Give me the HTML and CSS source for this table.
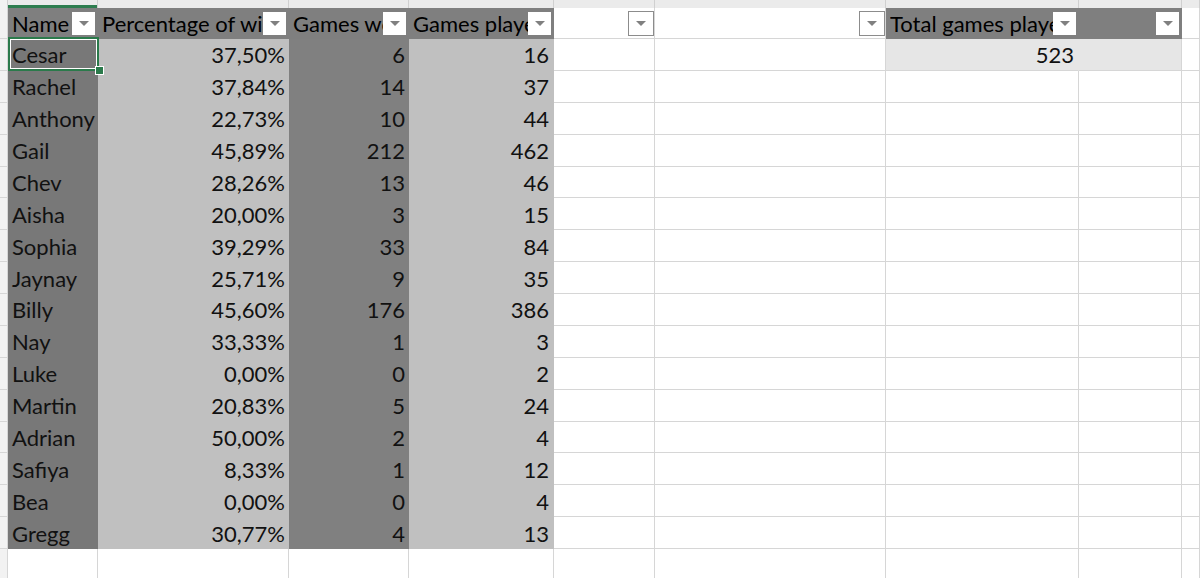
FILE: index.html
```html
<!DOCTYPE html>
<html>
<head>
<meta charset="utf-8">
<link rel="stylesheet" href="styles.css">
<title>Sheet</title>
</head>
<body>
<div class="sheet">
  <div class="row top">
    <div class="c rh"></div><div class="c sel-col"></div><div class="c"></div><div class="c"></div><div class="c"></div><div class="c"></div><div class="c"></div><div class="c"></div><div class="c"></div><div class="c"></div>
  </div>
  <div class="row head">
    <div class="c rh"></div>
    <div class="c th"><span class="lbl">Name</span><span class="dd"></span></div>
    <div class="c th"><span class="lbl">Percentage of wins</span><span class="dd"></span></div>
    <div class="c th"><span class="lbl">Games won</span><span class="dd"></span></div>
    <div class="c th"><span class="lbl">Games played</span><span class="dd"></span></div>
    <div class="c te"><span class="lbl"></span><span class="dd bd"></span></div>
    <div class="c te"><span class="lbl"></span><span class="dd bd"></span></div>
    <div class="c th"><span class="lbl">Total games played</span><span class="dd"></span></div>
    <div class="c th"><span class="lbl"></span><span class="dd"></span></div>
    <div class="c"></div>
  </div>
  <div class="row"><div class="c rh"></div><div class="c nm active">Cesar<span class="selbox"></span><span class="handle"></span></div><div class="c pc">37,50%</div><div class="c gw">6</div><div class="c gp">16</div><div class="c"></div><div class="c"></div><div class="c tot">523</div><div class="c tot2"></div><div class="c"></div></div>
  <div class="row"><div class="c rh"></div><div class="c nm">Rachel</div><div class="c pc">37,84%</div><div class="c gw">14</div><div class="c gp">37</div><div class="c"></div><div class="c"></div><div class="c"></div><div class="c"></div><div class="c"></div></div>
  <div class="row"><div class="c rh"></div><div class="c nm">Anthony</div><div class="c pc">22,73%</div><div class="c gw">10</div><div class="c gp">44</div><div class="c"></div><div class="c"></div><div class="c"></div><div class="c"></div><div class="c"></div></div>
  <div class="row"><div class="c rh"></div><div class="c nm">Gail</div><div class="c pc">45,89%</div><div class="c gw">212</div><div class="c gp">462</div><div class="c"></div><div class="c"></div><div class="c"></div><div class="c"></div><div class="c"></div></div>
  <div class="row"><div class="c rh"></div><div class="c nm">Chev</div><div class="c pc">28,26%</div><div class="c gw">13</div><div class="c gp">46</div><div class="c"></div><div class="c"></div><div class="c"></div><div class="c"></div><div class="c"></div></div>
  <div class="row"><div class="c rh"></div><div class="c nm">Aisha</div><div class="c pc">20,00%</div><div class="c gw">3</div><div class="c gp">15</div><div class="c"></div><div class="c"></div><div class="c"></div><div class="c"></div><div class="c"></div></div>
  <div class="row"><div class="c rh"></div><div class="c nm">Sophia</div><div class="c pc">39,29%</div><div class="c gw">33</div><div class="c gp">84</div><div class="c"></div><div class="c"></div><div class="c"></div><div class="c"></div><div class="c"></div></div>
  <div class="row"><div class="c rh"></div><div class="c nm">Jaynay</div><div class="c pc">25,71%</div><div class="c gw">9</div><div class="c gp">35</div><div class="c"></div><div class="c"></div><div class="c"></div><div class="c"></div><div class="c"></div></div>
  <div class="row"><div class="c rh"></div><div class="c nm">Billy</div><div class="c pc">45,60%</div><div class="c gw">176</div><div class="c gp">386</div><div class="c"></div><div class="c"></div><div class="c"></div><div class="c"></div><div class="c"></div></div>
  <div class="row"><div class="c rh"></div><div class="c nm">Nay</div><div class="c pc">33,33%</div><div class="c gw">1</div><div class="c gp">3</div><div class="c"></div><div class="c"></div><div class="c"></div><div class="c"></div><div class="c"></div></div>
  <div class="row"><div class="c rh"></div><div class="c nm">Luke</div><div class="c pc">0,00%</div><div class="c gw">0</div><div class="c gp">2</div><div class="c"></div><div class="c"></div><div class="c"></div><div class="c"></div><div class="c"></div></div>
  <div class="row"><div class="c rh"></div><div class="c nm">Martin</div><div class="c pc">20,83%</div><div class="c gw">5</div><div class="c gp">24</div><div class="c"></div><div class="c"></div><div class="c"></div><div class="c"></div><div class="c"></div></div>
  <div class="row"><div class="c rh"></div><div class="c nm">Adrian</div><div class="c pc">50,00%</div><div class="c gw">2</div><div class="c gp">4</div><div class="c"></div><div class="c"></div><div class="c"></div><div class="c"></div><div class="c"></div></div>
  <div class="row"><div class="c rh"></div><div class="c nm">Safiya</div><div class="c pc">8,33%</div><div class="c gw">1</div><div class="c gp">12</div><div class="c"></div><div class="c"></div><div class="c"></div><div class="c"></div><div class="c"></div></div>
  <div class="row"><div class="c rh"></div><div class="c nm">Bea</div><div class="c pc">0,00%</div><div class="c gw">0</div><div class="c gp">4</div><div class="c"></div><div class="c"></div><div class="c"></div><div class="c"></div><div class="c"></div></div>
  <div class="row"><div class="c rh"></div><div class="c nm">Gregg</div><div class="c pc">30,77%</div><div class="c gw">4</div><div class="c gp">13</div><div class="c"></div><div class="c"></div><div class="c"></div><div class="c"></div><div class="c"></div></div>
  <div class="row"><div class="c rh"></div><div class="c"></div><div class="c"></div><div class="c"></div><div class="c"></div><div class="c"></div><div class="c"></div><div class="c"></div><div class="c"></div><div class="c"></div></div>
</div>
</body>
</html>
```

FILE: styles.css
```css
html, body {
  margin: 0;
  padding: 0;
  background: #ffffff;
  overflow: hidden;
}
.sheet {
  width: 1200px;
  height: 578px;
  overflow: hidden;
  font-family: Lato, "Liberation Sans", sans-serif;
  font-size: 22px;
  color: #111;
}
.row {
  display: grid;
  grid-template-columns: 8px 90px 191px 120px 145px 101px 231px 193px 103px 1fr;
  height: 31.875px;
}
.row.top {
  height: 8px;
  background: #ebebeb;
}
.row.head {
  height: 31px;
}
.c {
  box-sizing: border-box;
  border-right: 1px solid #d6d6d6;
  border-bottom: 1px solid #d6d6d6;
  display: flex;
  align-items: center;
  justify-content: flex-end;
  padding: 1px 3px 0 4px;
  white-space: nowrap;
  overflow: hidden;
  min-width: 0;
}
.top .c {
  border-bottom: none;
  border-right-color: #d0d0d0;
  padding: 0;
}
.top .sel-col {
  box-shadow: inset 0 -3px 0 #2e7d4f;
  border-right-color: #cfcfcf;
}
.rh {
  background: #f2f2f2;
  padding: 0;
}
.th {
  background: #7f7f7f;
  border-color: transparent;
  justify-content: flex-start;
  padding: 1px 2px 0 4px;
  color: #000;
}
.te {
  justify-content: flex-start;
  padding: 0 0 0 4px;
  border-bottom-color: #d6d6d6;
}
.lbl {
  flex: 1;
  overflow: hidden;
  white-space: nowrap;
  min-width: 0;
}
.dd {
  flex: none;
  width: 23px;
  height: 23px;
  box-sizing: border-box;
  background: #fff;
  display: flex;
  align-items: center;
  justify-content: center;
}
.dd::after {
  content: "";
  width: 0;
  height: 0;
  border-left: 5px solid transparent;
  border-right: 5px solid transparent;
  border-top: 5px solid #808080;
}
.dd.bd {
  width: 26px;
  height: 25px;
  border: 1px solid #8c8c8c;
}
.nm {
  background: #787878;
  border-color: transparent;
  justify-content: flex-start;
  padding-left: 4px;
  position: relative;
  overflow: visible;
}
.pc, .gp {
  background: #c0c0c0;
  border-color: transparent;
}
.gw {
  background: #808080;
  border-color: transparent;
}
.gp {
  padding-right: 4px;
}
.tot {
  background: #e6e6e6;
  border-right-color: transparent;
  padding-right: 4px;
}
.tot2 {
  background: #e6e6e6;
}
.active {
  z-index: 2;
}
.selbox {
  position: absolute;
  left: 0;
  top: -2px;
  width: 91px;
  height: 34px;
  box-sizing: border-box;
  border: 2px solid #2b7a4b;
  box-shadow: inset 0 0 0 1px #ffffff;
}
.handle {
  position: absolute;
  left: 87px;
  top: 27px;
  width: 7px;
  height: 7px;
  background: #2b7a4b;
  border: 1px solid #ffffff;
}
```
